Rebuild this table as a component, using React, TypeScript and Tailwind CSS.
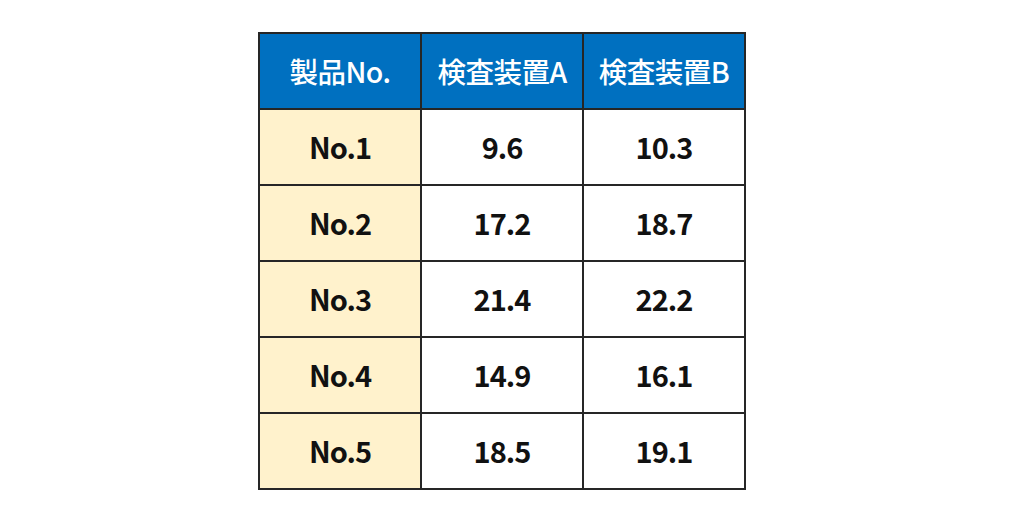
const rows = [
  { id: "No.1", a: "9.6", b: "10.3" },
  { id: "No.2", a: "17.2", b: "18.7" },
  { id: "No.3", a: "21.4", b: "22.2" },
  { id: "No.4", a: "14.9", b: "16.1" },
  { id: "No.5", a: "18.5", b: "19.1" },
];

const font = { fontFamily: '"Noto Sans CJK JP", "Noto Sans", sans-serif' };

export default function App() {
  return (
    <div className="w-[1024px] h-[525px] bg-white pt-[32px] pl-[258px]" style={font}>
      <table className="border-collapse table-fixed w-[488px]">
        <thead>
          <tr className="h-[76px]">
            {["製品No.", "検査装置A", "検査装置B"].map((h) => (
              <th
                key={h}
                className="border-2 border-[#262626] bg-[#0070c0] text-white text-[28.5px] font-medium tracking-[-0.5px] text-center align-middle p-0"
              >
                {h}
              </th>
            ))}
          </tr>
        </thead>
        <tbody>
          {rows.map((r) => (
            <tr key={r.id} className="h-[76px]">
              <td className="border-2 border-[#262626] bg-[#fff2cc] text-[#111] text-[29px] font-semibold tracking-[-1px] text-center p-0">
                {r.id}
              </td>
              <td className="border-2 border-[#262626] text-[#111] text-[29px] font-semibold tracking-[-1px] text-center p-0">
                {r.a}
              </td>
              <td className="border-2 border-[#262626] text-[#111] text-[29px] font-semibold tracking-[-1px] text-center p-0">
                {r.b}
              </td>
            </tr>
          ))}
        </tbody>
      </table>
    </div>
  );
}
